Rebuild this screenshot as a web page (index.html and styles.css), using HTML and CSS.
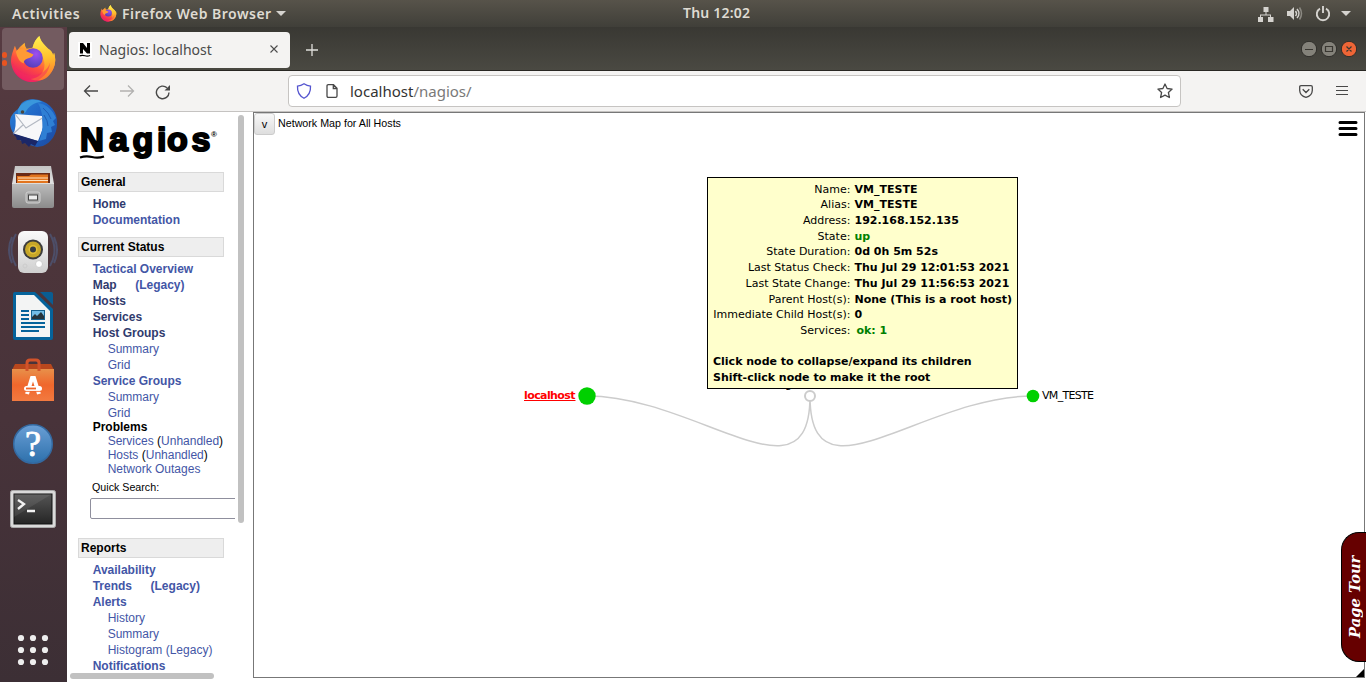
FILE: index.html
```html
<!DOCTYPE html>
<html lang="en">
<head>
<meta charset="utf-8">
<title>Nagios: localhost</title>
<link rel="stylesheet" href="styles.css">
</head>
<body>
<svg class="defs" width="0" height="0" aria-hidden="true">
  <defs>
    <linearGradient id="fire" x1=".8" y1="0" x2=".3" y2="1"><stop offset="0" stop-color="#fff44f"/><stop offset=".35" stop-color="#ffb02e"/><stop offset=".65" stop-color="#ff4f3f"/><stop offset="1" stop-color="#e5126f"/></linearGradient>
    <linearGradient id="flame" x1=".5" y1="0" x2=".7" y2="1"><stop offset="0" stop-color="#fff04d"/><stop offset=".5" stop-color="#ffc42e"/><stop offset="1" stop-color="#ff7a2a"/></linearGradient>
    <radialGradient id="globe" cx=".65" cy=".3" r=".75"><stop offset="0" stop-color="#a04df0"/><stop offset=".6" stop-color="#6b48cf"/><stop offset="1" stop-color="#5a3bb8"/></radialGradient>
    <linearGradient id="bird" x1="0" y1="0" x2="1" y2="1"><stop offset="0" stop-color="#2b86d8"/><stop offset=".5" stop-color="#1f62c4"/><stop offset="1" stop-color="#1b4a9f"/></linearGradient>
    <linearGradient id="grey" x1="0" y1="0" x2="0" y2="1"><stop offset="0" stop-color="#bdbdbd"/><stop offset="1" stop-color="#8b8b8b"/></linearGradient>
    <linearGradient id="white" x1="0" y1="0" x2="0" y2="1"><stop offset="0" stop-color="#fafafa"/><stop offset="1" stop-color="#cfcfcf"/></linearGradient>
    <linearGradient id="lid" x1="0" y1="0" x2="0" y2="1"><stop offset="0" stop-color="#c4c4c4"/><stop offset="1" stop-color="#e2e2e2"/></linearGradient>
    <linearGradient id="bag" x1="0" y1="0" x2="0" y2="1"><stop offset="0" stop-color="#e8904a"/><stop offset=".5" stop-color="#f0672c"/><stop offset="1" stop-color="#f27a40"/></linearGradient>
    <linearGradient id="help" x1="0" y1="0" x2="0" y2="1"><stop offset="0" stop-color="#6a9fd6"/><stop offset="1" stop-color="#2d70ab"/></linearGradient>
    <linearGradient id="term" x1="0" y1="0" x2="0" y2="1"><stop offset="0" stop-color="#555"/><stop offset="1" stop-color="#252525"/></linearGradient>
    <symbol id="firefox" viewBox="-1 0 48 48">
      <path d="M29 0c1 5 5 9 9 13q4 2 5 7l1-3q3 9-1 17C39 42 31 47 22 47 10 47 1 38 0 26 0 20 2 16 4 10l2 5q3-4 8-8 0 4 2 6l6-1q2-8 7-12z" fill="url(#fire)"/>
      <path d="M22 12q2-8 7-12c1 5 5 9 9 13q4 2 5 7l1-3c3 9 0 19-7 25-5 4-12 4-17 2 11-1 17-10 13-21-2-6-6-9-11-11z" fill="url(#flame)" opacity=".85"/>
      <circle cx="22.500" cy="22.500" r="10" fill="url(#globe)"/>
      <path d="M5 16q3-4 8-3 2 3 6 4l4 2q-1 3-6 4-4 1-4 5-6-2-8-12z" fill="#ff9a35"/>
      <path d="M1 25c3 9 10 15 20 15 10 0 17-6 19-13-1 11-9 18-18 20C10 47 2 37 1 25z" fill="#f52c5c" opacity=".5"/>
    </symbol>
  </defs>
</svg>

<header class="topbar">
  <span class="activities">Activities</span>
  <svg class="app-icon" width="17" height="17"><use href="#firefox"/></svg>
  <span class="app-name">Firefox Web Browser</span>
  <i class="caret app-caret"></i>
  <span class="clock">Thu 12:02</span>
  <div class="tray">
    <svg width="16" height="16" viewBox="0 0 16 16" fill="#d5d3cf"><path d="M5.500 1h5v5h-5zM0 11h5v5H0zM10 11h5.500v5H10zM7.500 6h1v2.500H13V11h-1V9.500H3V11H2V8.500h5.500z"/></svg>
    <svg width="17" height="16" viewBox="0 0 17 16"><path d="M1 5h3l4-4v13L4 10H1z" fill="#d5d3cf"/><g fill="none" stroke="#d5d3cf" stroke-width="1.500"><path d="M9.500 5q2 2.500 0 5"/><path d="M11 3q4 4.500 0 9"/><path d="M13.500 1.500q4 6 0 12" stroke="#8b8982"/></g></svg>
    <svg width="16" height="16" viewBox="0 0 16 16" fill="none" stroke="#d5d3cf" stroke-width="1.900"><path d="M5 2.600a6.200 6.200 0 1 0 6 0M8 0v7"/></svg>
    <i class="caret"></i>
  </div>
</header>

<div class="desktop">
  <nav class="dock">
    <div class="tile active"><i class="pip"></i><i class="pip low"></i><svg width="47" height="47"><use href="#firefox"/></svg></div>
    <div class="tile"><svg width="50" height="50" viewBox="0 0 50 50">
      <path d="M12 8C14 2 23 0 31 2c11 3 19 12 18 24 0 10-6 19-14 22l-6 1C14 46 2 37 2 24c0-6 4-10 8-13z" fill="url(#bird)"/>
      <path d="M12 8c6-7 16-8 22-4-8 0-13 4-17 11l-7 1q-1-4 2-8z" fill="#3a97dc"/>
      <path d="M7 16l27 2 1 12-5 13L5 36q4-6 2-20z" fill="#f7f7f9"/>
      <path d="M7 16l11 14 18-11M5 36l10-9" fill="none" stroke="#b3b8c2" stroke-width="1.200"/>
      <path d="M30 5c9 1 15 8 18 15l-3 3 2 4-4 2 1 5-5 1-1 6-7 2c5-11 5-27-1-38z" fill="#2f7fd4"/>
      <path d="M35 10q6 5 8 11M36 17q4 6 4 11" fill="none" stroke="#1e5cb5"/>
      <path d="M4 35l26 8-3 5-4-2-2 3-4-4-3 1-1-4-4 0-1-3z" fill="#1b2767"/><circle cx="14.500" cy="14" r="1.800" fill="#4a4740"/></svg></div>
    <div class="tile"><svg width="44" height="46" viewBox="0 0 44 46">
      <path d="M4 2h36l3 18H1z" fill="url(#lid)"/><path d="M5 9h34v10H5z" fill="#6b2b17"/><path d="M6 12h12l2-1.500h17V20H6z" fill="#e2751f"/><path d="M7 14h30M7 16.500h30" stroke="#ffe2c0" stroke-width="1"/><path d="M1 19h42v23q0 2-2 2H3q-2 0-2-2z" fill="url(#grey)"/><path d="M1 19.500h42" stroke="#ddd"/><rect x="15" y="28" width="14" height="11" rx="2" fill="#aaa" stroke="#d0d0d0"/><rect x="17.500" y="31" width="9" height="5" fill="#eee" stroke="#444"/></svg></div>
    <div class="tile"><svg width="50" height="46" viewBox="0 0 50 46">
      <g fill="none" stroke="#4d4e68" stroke-width="2"><path d="M8 5q-9 16 0 32M4 8q-6 13 0 26M42 5q9 16 0 32M46 8q6 13 0 26"/></g>
      <rect x="10" y="2" width="30" height="42" rx="6" fill="url(#white)"/><circle cx="25" cy="20.500" r="10" fill="#3c3c3c"/><circle cx="25" cy="20.500" r="8" fill="#c6a628"/><circle cx="25" cy="20.500" r="4.500" fill="#e2bf35"/><circle cx="25" cy="20.500" r="3" fill="#373d42"/><circle cx="31" cy="35" r="3.500" fill="#fff" stroke="#ccc"/><circle cx="17" cy="37" r="2" fill="none" stroke="#ccc"/></svg></div>
    <div class="tile"><svg width="40" height="48" viewBox="0 0 40 48">
      <path d="M0 2q0-2 2-2h20l18 17v29q0 2-2 2H2q-2 0-2-2z" fill="#05639b"/><path d="M3 3h18l16 16v26H3z" fill="#f3f4f4"/><path d="M27 0h11q2 0 2 2v11z" fill="#0a5d92"/><path d="M8 19h8M8 23h8M8 27h8M8 31h24M8 35h24M8 39h18" stroke="#05639b" stroke-width="2"/><rect x="18" y="18" width="14" height="10" fill="#15608e"/><path d="M19 19h12v8H19z" fill="#72bce6"/><path d="M19 27v-2l3-3 2 2 4-4 3 4v3z" fill="#26343c"/></svg></div>
    <div class="tile"><svg width="42" height="44" viewBox="0 0 42 44">
      <path d="M3 6h36l3 6H0z" fill="#b8471d"/><path d="M0 11h42v32H0z" fill="url(#bag)"/><path d="M15 13V5q0-3 3-3h6q3 0 3 3v8" fill="none" stroke="#d2532a" stroke-width="3"/><path d="M15 36l5-16h2l5 16" fill="none" stroke="#fff" stroke-width="4"/><rect x="12" y="28" width="18" height="5" rx="2.500" fill="#fff"/><path d="M14 30.500h10" stroke="#f0672c" stroke-width="1.800"/><path d="M12 33.400h18" stroke="#f0672c" stroke-width=".9"/></svg></div>
    <div class="tile"><svg width="42" height="42" viewBox="0 0 42 42"><circle cx="21" cy="21" r="19.300" fill="url(#help)" stroke="#3469a0" stroke-width="1.500"/><text x="21" y="33" class="qmark">?</text></svg></div>
    <div class="tile term"><svg width="46" height="38" viewBox="0 0 46 38"><rect x=".5" y=".5" width="45" height="37" rx="2" fill="#dadada" stroke="#a9a9a9"/><rect x="4" y="4" width="38" height="30" fill="url(#term)" stroke="#111"/><path d="M4 4h38L4 27z" fill="#fff" opacity=".08"/><path d="M8 10l6 4-6 5M17 21h8" fill="none" stroke="#f2f2f2" stroke-width="2.300"/></svg></div>
    <svg class="apps" width="32" height="32" viewBox="0 0 32 32" fill="#eee"><circle cx="4" cy="4" r="3.100"/><circle cx="16" cy="4" r="3.100"/><circle cx="28" cy="4" r="3.100"/><circle cx="4" cy="16" r="3.100"/><circle cx="16" cy="16" r="3.100"/><circle cx="28" cy="16" r="3.100"/><circle cx="4" cy="28" r="3.100"/><circle cx="16" cy="28" r="3.100"/><circle cx="28" cy="28" r="3.100"/></svg>
  </nav>

  <section class="browser">
    <div class="tabs">
      <div class="tab">
        <svg width="14" height="16" viewBox="0 0 14 16"><rect width="14" height="16" fill="#fff"/><path d="M2 1h3l4 5V1h3v10.500H9L5 7v4.500H2z"/><path d="M1.500 13.800q3-.8 5.500 0t5-.3" fill="none" stroke="#000" stroke-width="1.200"/></svg>
        <span class="tab-title">Nagios: localhost</span>
        <svg class="tab-close" width="8" height="8" viewBox="0 0 8 8"><path d="M.5.500l7 7M7.500.500l-7 7" stroke="#4c4c4c" stroke-width="1.100"/></svg>
      </div>
      <svg class="plus" width="12" height="12" viewBox="0 0 12 12"><path d="M6 0v12M0 6h12" stroke="#e0dfdb" stroke-width="1.300"/></svg>
      <svg class="winbtns" width="56" height="16" viewBox="0 0 56 16"><g stroke="#2e2d29"><circle cx="8" cy="8" r="7.700" fill="#84827a"/><circle cx="28" cy="8" r="7.700" fill="#84827a"/><circle cx="48" cy="8" r="7.700" fill="#ee6536"/></g><path d="M4 8.500h8M24.500 5.500h7v5h-7zM45.500 5.500l5 5M50.500 5.500l-5 5" fill="none" stroke="#393731" stroke-width="1.200"/></svg>
    </div>
    <div class="toolbar">
      <svg class="back" width="16" height="14" viewBox="0 0 16 14"><path d="M15 7H1.500M7 1.500L1.500 7 7 12.500" fill="none" stroke="#484848" stroke-width="1.300"/></svg>
      <svg class="fwd" width="16" height="14" viewBox="0 0 16 14"><path d="M1 7h13.500M9 1.500L14.500 7 9 12.500" fill="none" stroke="#b2b1b0" stroke-width="1.300"/></svg>
      <svg class="reload" width="16" height="16" viewBox="0 0 16 16"><path d="M14 8.500A6.300 6.300 0 1 1 12 3.800" fill="none" stroke="#484848" stroke-width="1.400"/><path d="M15 1v5.500H9.500z" fill="#484848"/></svg>
      <div class="urlbar">
        <svg width="16" height="16" viewBox="0 0 16 16"><path d="M8 .8q3 2 6.500 2.400.5 8.300-6.500 12Q1 11.500 1.500 3.200 5 2.800 8 .8z" fill="none" stroke="#5454cf" stroke-width="1.300"/></svg>
        <svg class="page" width="12" height="14" viewBox="0 0 12 14"><path d="M1 2q0-1.300 1.300-1.300H7.500L11 4.200V12q0 1.300-1.300 1.300H2.300Q1 13.300 1 12zM7.300.8v3.700H11" fill="none" stroke="#484848" stroke-width="1.300"/></svg>
        <span class="url">localhost<span class="path">/nagios/</span></span>
        <svg class="star" width="16" height="16" viewBox="0 0 16 16"><path d="M8 1l2.100 4.500 5 .6-3.700 3.400 1 5L8 12.100l-4.400 2.400 1-5L.9 6.100l5-.6z" fill="none" stroke="#484848" stroke-width="1.300" stroke-linejoin="round"/></svg>
      </div>
      <svg class="pocket" width="14" height="13" viewBox="0 0 14 13"><path d="M2 .7h10q1.300 0 1.300 1.300v3.500Q13 11 7 12.300 1 11 .7 5.500V2Q.7.700 2 .7zM3.700 4.200L7 7.500l3.300-3.300" fill="none" stroke="#484848" stroke-width="1.300"/></svg>
      <svg class="burger" width="12" height="11" viewBox="0 0 12 11"><path d="M0 1.500h12M0 5.500h12M0 9.500h12" stroke="#484848" stroke-width="1.200"/></svg>
    </div>

    <div class="page-body">
      <aside class="side">
        <div class="side-content">
          <svg class="logo" width="142" height="40" viewBox="0 0 142 40"><text x="2" y="29" class="logo-text" font-size="33">N</text><text x="31 54.500 79 89 113.500" y="29" class="logo-text" font-size="34">agios</text><path d="M2 35.500q6-2 12-.5t12-.5" fill="none" stroke="#000" stroke-width="2.300"/><text x="133" y="15" class="reg">®</text></svg>
          <h2>General</h2>
          <ul class="links"><li><a class="seen">Home</a></li><li><a>Documentation</a></li></ul>
          <h2>Current Status</h2>
          <ul class="links status">
            <li><a>Tactical Overview</a></li><li><a class="seen">Map</a><a class="legacy">(Legacy)</a></li><li><a class="seen">Hosts</a></li><li><a class="seen">Services</a></li><li><a class="seen">Host Groups</a></li>
            <li class="sub"><a>Summary</a></li><li class="sub"><a>Grid</a></li><li><a>Service Groups</a></li><li class="sub"><a>Summary</a></li><li class="sub"><a>Grid</a></li>
          </ul>
          <ul class="links problems"><li>Problems</li><li class="sub"><a>Services</a> (<a>Unhandled</a>)</li><li class="sub"><a>Hosts</a> (<a>Unhandled</a>)</li><li class="sub"><a>Network Outages</a></li></ul>
          <div class="search"><label>Quick Search:</label><div class="field"></div></div>
          <h2>Reports</h2>
          <ul class="links"><li><a>Availability</a></li><li><a>Trends</a><a class="legacy">(Legacy)</a></li><li><a>Alerts</a></li><li class="sub"><a>History</a></li><li class="sub"><a>Summary</a></li><li class="sub"><a>Histogram (Legacy)</a></li><li><a>Notifications</a></li></ul>
        </div>
        <i class="vbar"></i><i class="hbar"></i>
      </aside>
      <main class="frame">
        <div class="frame-head"><span class="toggle">v</span><span class="map-title">Network Map for All Hosts</span>
          <svg class="menu" width="20" height="16" viewBox="0 0 20 16"><path d="M2 2.500h16M2 8.500h16M2 14.500h16" stroke="#000" stroke-width="3" stroke-linecap="round"/></svg></div>
        <svg class="map" width="1110" height="564" viewBox="254 113 1110 564">
          <path d="M810 396C810 508 698 396 587 396M810 396C810 508 922 396 1033 396" fill="none" stroke="#ccc" stroke-width="1.500"/>
          <text x="770" y="388">Nagios Process</text>
          <circle cx="810" cy="396" r="5" fill="#fff" stroke="#ccc" stroke-width="2"/>
          <circle cx="587" cy="396" r="8.700" fill="#00d000"/><circle cx="1033" cy="396" r="6.300" fill="#00d000"/>
          <text x="524" y="399" class="localhost" textLength="51.500">localhost</text><path d="M524 400.500h51.500" stroke="red"/>
          <text x="1042" y="399" textLength="52">VM_TESTE</text>
          <path d="M1364 669v8h-8z"/>
        </svg>
        <div class="popup">
          <dl><dt>Name:</dt><dd>VM_TESTE</dd><dt>Alias:</dt><dd>VM_TESTE</dd><dt>Address:</dt><dd>192.168.152.135</dd><dt>State:</dt><dd class="ok">up</dd><dt>State Duration:</dt><dd>0d 0h 5m 52s</dd><dt>Last Status Check:</dt><dd>Thu Jul 29 12:01:53 2021</dd><dt>Last State Change:</dt><dd>Thu Jul 29 11:56:53 2021</dd><dt>Parent Host(s):</dt><dd>None (This is a root host)</dd><dt>Immediate Child Host(s):</dt><dd>0</dd><dt>Services:</dt><dd class="ok services">ok: 1</dd></dl>
          <p>Click node to collapse/expand its children</p><p>Shift-click node to make it the root</p>
        </div>
      </main>
      <div class="tour"><span>Page Tour</span></div>
    </div>
  </section>
</div>
</body>
</html>
```
FILE: styles.css
```css
* { box-sizing: border-box; }
body { margin: 0; width: 1366px; height: 682px; overflow: hidden; font-family: "Liberation Sans", sans-serif; background: #fff; }
svg { display: block; flex: none; }
.defs { position: absolute; }
ul, dl, dd, h2, p { margin: 0; padding: 0; list-style: none; }

/* Desktop panel */
.topbar { height: 27px; display: grid; grid-template-columns: 88px 17px auto auto 1fr auto; align-items: center; padding: 0 15px 0 12px; position: relative; background: linear-gradient(#57534a, #403f39); color: #dfdbd2; font: 600 14px "Noto Sans", sans-serif; white-space: nowrap; }
.activities { letter-spacing: .58px; }
.app-name { margin-left: 5px; letter-spacing: .49px; }
.caret { border: 5px solid transparent; border-top-color: #d5d3cf; border-bottom: 0; width: 0; height: 0; }
.app-caret { margin-left: 4px; }
.clock { position: absolute; left: 683px; top: 3px; letter-spacing: .2px; }
.tray { grid-column: 6; display: flex; align-items: center; gap: 12px; }
.tray .caret { margin-left: -2px; }
.desktop { display: grid; grid-template-columns: 67px 1299px; height: 655px; }

/* Launcher */
.dock { background: linear-gradient(#573b42, #4e363b 25%, #48333a 60%, #3c2f35); display: flex; flex-direction: column; align-items: center; padding-right: 1px; }
.tile { position: relative; width: 62px; height: 62px; margin-bottom: 2.200px; display: grid; place-items: center; }
.tile:first-child { margin-top: 1px; }
.active { background: #735b60; border-radius: 4px; }
.term { padding-top: 2px; }
.pip { position: absolute; left: 0; top: 24px; width: 5px; height: 6px; border-radius: 3px; background: #e95420; }
.low { top: 32px; }
.apps { margin-top: 92px; }
.qmark { font: 36px "Liberation Serif", serif; fill: #fff; stroke: #fff; stroke-width: .8; text-anchor: middle; }

/* Browser chrome */
.browser { display: grid; grid-template-rows: 43px 42px 570px; }
.tabs { display: flex; align-items: center; background: linear-gradient(#393833, #4a4942); padding: 0 9px 0 2px; }
.tab { width: 221px; height: 36px; margin-top: 2px; background: #f4f3f2; border-radius: 4px; display: flex; align-items: center; padding: 0 12px 0 9px; color: #4a4a4a; font: 14px "Noto Sans", sans-serif; }
.tab-title { margin-left: 7px; letter-spacing: .03px; }
.tab-close { margin: -2px 0 0 auto; }
.plus { margin: 2px 0 0 16px; }
.winbtns { margin-left: auto; }
.toolbar { background: #f4f3f2; border-top: 1px solid #282723; border-bottom: 1px solid #c5c3c1; display: flex; align-items: center; padding: 0 18px 0 16px; }
.fwd { margin-left: 20px; }
.reload { margin: 1px 0 0 20px; }
.urlbar { width: 893px; height: 32px; margin-left: 117px; border: 1px solid #c6c4c2; border-radius: 4px; background: #fff; display: flex; align-items: center; padding: 0 7px; }
.page { margin-left: 14px; }
.url { margin-left: 12px; color: #333; font: 15px "Noto Sans", sans-serif; }
.path { color: #797979; }
.star { margin-left: auto; }
.pocket { margin: 0 23px 0 118px; }
.burger { margin-top: -1px; }
.page-body { position: relative; display: grid; grid-template-columns: 186px 1113px; }

/* Navigation frame */
.side { position: relative; overflow: hidden; height: 570px; }
.side-content { width: 168px; height: 560px; overflow: hidden; padding: 10px 0 0 11px; }
.logo { margin-bottom: 10px; }
.logo-text { font-family: "Liberation Sans", sans-serif; font-weight: bold; stroke: #000; stroke-width: 2; stroke-linejoin: round; }
.reg { font: bold 8px "Liberation Sans", sans-serif; }
h2 { width: 146px; height: 20px; border: 1px solid #d9d9d9; background: #eee; font: bold 12px/18px "Liberation Sans", sans-serif; padding-left: 2px; }
.links { padding: 4px 0 9px 14.700px; font: bold 12px/16px "Liberation Sans", sans-serif; color: #000; white-space: nowrap; }
.links a { color: #4356a6; }
.links a.seen { color: #303b6e; }
.links .legacy { margin-left: 18.500px; }
.links .sub { padding-left: 15px; font-weight: normal; }
.links.status { padding-bottom: 0; }
.links.problems { padding-top: 0; padding-bottom: 0; margin-top: -1px; line-height: 14px; }
.search { padding: 5px 0 0 12px; height: 62px; font-size: 11px; line-height: 12px; }
.search label { display: block; padding-left: 2px; font-size: 10.700px; }
.field { height: 21px; width: 180px; margin-top: 5px; border: 1px solid #8f8f9d; border-radius: 2px; }
.vbar { position: absolute; left: 171px; top: 3px; width: 6px; height: 408px; border-radius: 3px; background: #c1c1c1; }
.hbar { position: absolute; left: 3px; top: 561px; width: 144px; height: 6px; border-radius: 3px; background: #c1c1c1; }

/* Map frame */
.frame { position: relative; height: 566px; width: 1112px; border: 1px solid #777; overflow: hidden; }
.frame-head { position: absolute; inset: 0 0 auto; display: flex; align-items: flex-start; font-size: 10.700px; }
.toggle { width: 21px; height: 22px; background: linear-gradient(#f8f8f8, #dedede); border: 1px solid #ccc; border-radius: 3px; text-align: center; line-height: 21px; font-size: 11px; }
.map-title { margin: 4px 0 0 3px; }
.menu { margin: 7px 6px 0 auto; }
.map { font: 11px "DejaVu Sans", sans-serif; }
.localhost { fill: red; font-weight: bold; }
.popup { position: absolute; left: 453px; top: 64px; width: 311px; height: 212px; border: 1px solid #000; background: #ffffcc; padding: 3.600px 5px 0; font: 11px/15.700px "DejaVu Sans", sans-serif; white-space: nowrap; }
.popup dl { display: grid; grid-template-columns: 137.400px auto; column-gap: 4.100px; margin-bottom: 15.700px; }
.popup dt { text-align: right; }
.popup dd, .popup p { font-weight: bold; }
.popup .ok { color: #008000; }
.popup .services { padding-left: 2px; }

/* Tour tab hangs over the right window edge */
.tour { position: absolute; left: 1274px; top: 420px; width: 25px; height: 130px; border: 1px solid #000; border-right: 0; border-radius: 18px 0 0 18px; background: #600; color: #fff; }
.tour span { display: block; width: 26px; height: 128px; writing-mode: vertical-rl; transform: rotate(180deg); text-align: center; font: italic bold 14.700px/26px "DejaVu Serif", serif; }
```
